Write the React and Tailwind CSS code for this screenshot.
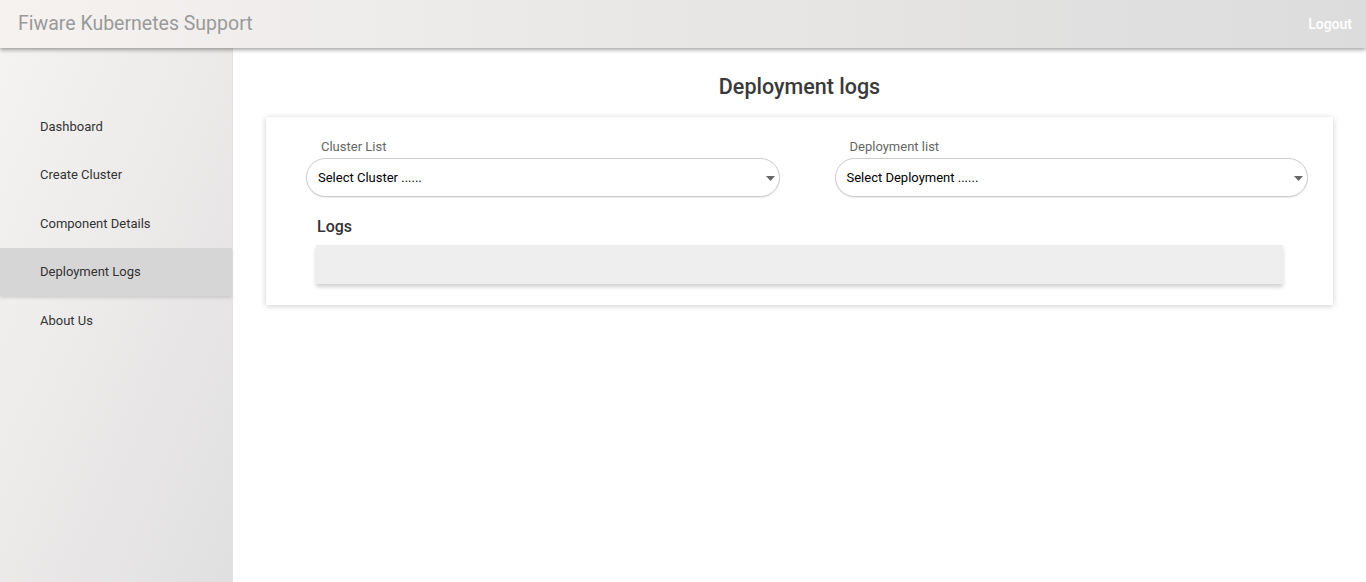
import React, { useState } from "react";

const navItems = [
  "Dashboard",
  "Create Cluster",
  "Component Details",
  "Deployment Logs",
  "About Us",
];

const SelectBox = ({ label, placeholder }) => (
  <div className="flex flex-col">
    <label className="pl-[15px] text-[13px] leading-[18px] text-[#666]">
      {label}
    </label>
    <div className="relative mt-[2px] h-[39px] rounded-full border border-[#ccc] bg-white shadow-[0_1px_1px_rgba(0,0,0,0.08)]">
      <div className="flex h-full items-center pl-[11px] text-[13px] text-black">
        {placeholder}
      </div>
      <svg
        className="absolute right-[4px] top-[17px]"
        width="9"
        height="5"
        viewBox="0 0 9 5"
      >
        <path d="M0 0h9L4.5 5z" fill="#666" />
      </svg>
    </div>
  </div>
);

export default function App() {
  const [active] = useState("Deployment Logs");

  return (
    <div className="flex h-[582px] flex-col overflow-hidden bg-white font-['Roboto',sans-serif]">
      <header className="relative z-10 flex h-[48px] shrink-0 items-center justify-between bg-gradient-to-r from-[#f5f2f0] to-[#dcdcdc] pl-[18px] pr-[14px] shadow-[0_2px_4px_rgba(0,0,0,0.35)]">
        <span className="text-[19.5px] text-[#9a9a9a]">Fiware Kubernetes Support</span>
        <button className="text-[14px] font-medium text-white">Logout</button>
      </header>

      <div className="flex flex-1">
        {/* sidebar */}
        <aside className="w-[233px] shrink-0 border-r border-[#e2e2e2] bg-gradient-to-br from-[#f5f3f2] to-[#e1e0e0] pt-[54px]">
          {navItems.map((item) => (
            <div
              key={item}
              className={
                item === active
                  ? "flex h-[48.5px] items-center bg-[#d7d6d6] pl-[40px] text-[13px] text-[#333] shadow-[0_2px_3px_rgba(0,0,0,0.12)]"
                  : "flex h-[48.5px] items-center pl-[40px] text-[13px] text-[#333]"
              }
            >
              {item}
            </div>
          ))}
        </aside>

        {/* main */}
        <main className="flex-1 pt-[24px]">
          <h1 className="text-center text-[21.5px] font-medium leading-[30px] text-[#3a3a3a]">
            Deployment logs
          </h1>
          <div className="mx-[33px] mt-[15px] bg-white pb-[21px] pl-[40px] pr-[25px] pt-[21px] shadow-[0_1px_6px_rgba(0,0,0,0.2)]">
            <div className="grid grid-cols-2 gap-[55px]">
              <SelectBox label="Cluster List" placeholder="Select Cluster ......" />
              <SelectBox label="Deployment list" placeholder="Select Deployment ......" />
            </div>
            <div className="mr-[25px] ml-[10px] mt-[19px]">
              <h2 className="pl-px text-[16px] font-medium leading-[22px] text-[#333]">Logs</h2>
              <div className="mt-[7px] h-[39px] bg-[#eeeeee] shadow-[0_3px_4px_rgba(0,0,0,0.18)]" />
            </div>
          </div>
        </main>
      </div>
    </div>
  );
}
